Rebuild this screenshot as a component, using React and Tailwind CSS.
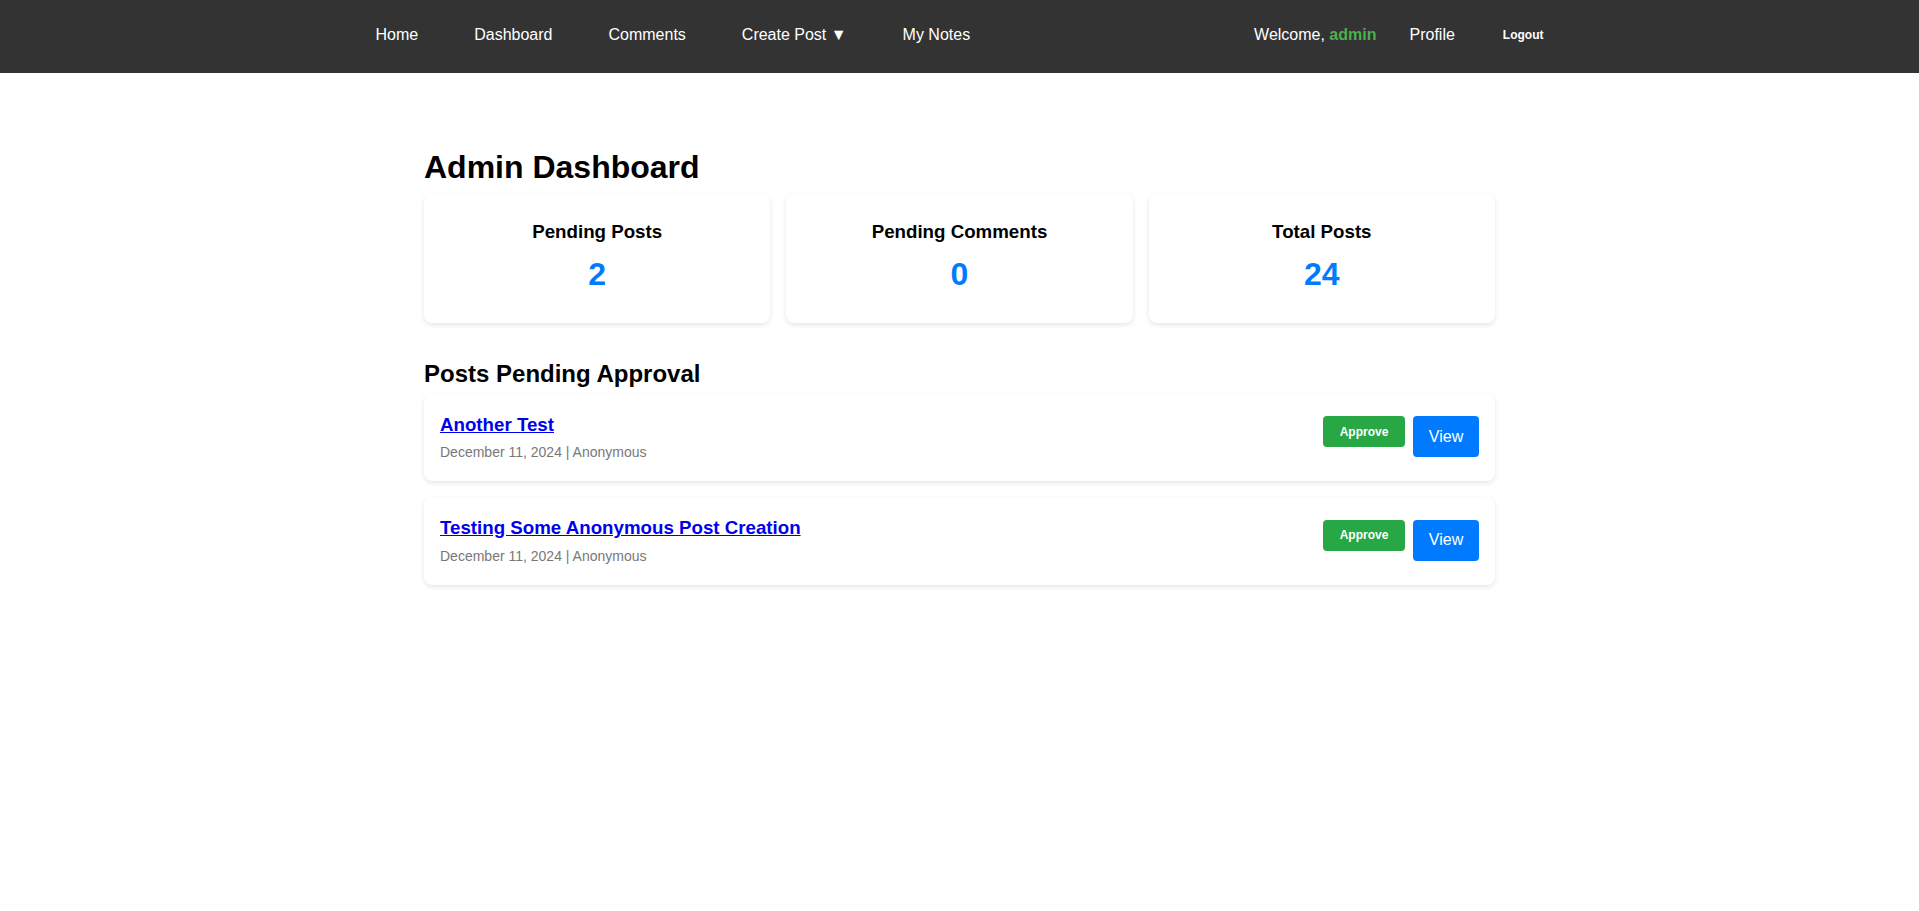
import React from 'react';

const stats = [
    { label: 'Pending Posts', value: 2 },
    { label: 'Pending Comments', value: 0 },
    { label: 'Total Posts', value: 24 },
];

const pendingPosts = [
    { id: 1, title: 'Another Test', date: 'December 11, 2024', author: 'Anonymous' },
    { id: 2, title: 'Testing Some Anonymous Post Creation', date: 'December 11, 2024', author: 'Anonymous' },
];

const Navbar = () => (
    <nav className="bg-[#333333] h-[73px] text-white">
        <div className="w-[1168px] mx-auto flex justify-between pt-[26px] text-[16px] leading-[18px]">
            <div className="flex gap-[56px]">
                <a href="#">Home</a>
                <a href="#">Dashboard</a>
                <a href="#">Comments</a>
                <a href="#">Create Post ▼</a>
                <a href="#">My Notes</a>
            </div>
            <div className="flex items-center">
                <span>Welcome, <span className="text-[#4caf50] font-bold">admin</span></span>
                <a href="#" className="ml-[33px]">Profile</a>
                <button className="ml-[48px] text-[12px] font-bold">Logout</button>
            </div>
        </div>
    </nav>
);

const App = () => {
    return (
        <div className="min-h-screen bg-white text-black font-['Liberation_Sans',Arial,sans-serif]">
            <Navbar />

            <main className="w-[1071px] mx-auto pt-[76px]">
                <h1 className="text-[32px] font-bold leading-[37px]">Admin Dashboard</h1>

                {/* Stat cards */}
                <div className="grid grid-cols-3 gap-4 mt-[8px]">
                    {stats.map(s => (
                        <div key={s.label} className="bg-white rounded-lg shadow-[0_2px_5px_rgba(0,0,0,0.1)] text-center pt-[27px] pb-[30px]">
                            <h3 className="text-[18.72px] font-bold leading-[21.5px]">{s.label}</h3>
                            <p className="text-[32px] font-bold leading-[37px] text-[#007bff] mt-[13px]">{s.value}</p>
                        </div>
                    ))}
                </div>

                <h2 className="text-[24px] font-bold leading-[28px] mt-[37px]">Posts Pending Approval</h2>

                <div className="mt-[6px] flex flex-col gap-4">
                    {pendingPosts.map(p => (
                        <div key={p.id} className="bg-white rounded-lg shadow-[0_2px_5px_rgba(0,0,0,0.1)] flex items-center justify-between px-4 pt-[20px] pb-[21px]">
                            <div>
                                <h3 className="text-[18.72px] font-bold leading-[21.5px]">
                                    <a href="#" className="text-[#0000ee] underline">{p.title}</a>
                                </h3>
                                <p className="text-[14px] leading-[16px] text-[#777777] mt-[9px]">{p.date} | {p.author}</p>
                            </div>
                            <div className="flex items-start gap-2">
                                <button className="bg-[#28a745] text-white text-[12px] font-bold rounded w-[82px] h-[31px]">Approve</button>
                                <button className="bg-[#007bff] text-white text-[16px] rounded w-[66px] h-[41px]">View</button>
                            </div>
                        </div>
                    ))}
                </div>
            </main>
        </div>
    );
};

export default App;
